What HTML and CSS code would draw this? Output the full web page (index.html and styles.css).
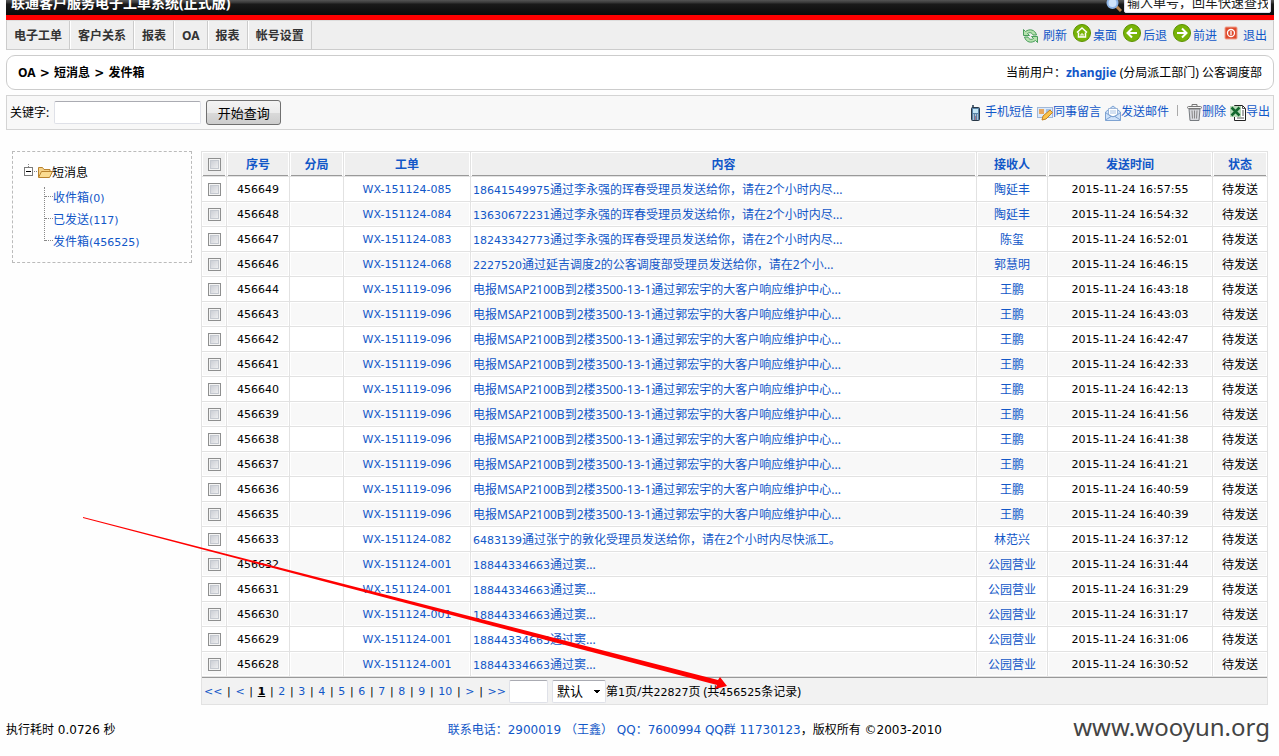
FILE: index.html
```
<!DOCTYPE html>
<html lang="zh-CN">
<head>
<meta charset="utf-8">
<title>联通客户服务电子工单系统(正式版)</title>
<link rel="stylesheet" href="styles.css">
</head>
<body>
<header class="banner">
  <h1 class="title">联通客户服务电子工单系统(正式版)</h1>
  <label class="quick" for="quick">
    <svg width="16" height="16" viewBox="0 0 16 16" aria-label="搜索"><path d="M10 9l5 5" stroke="#b9824c" stroke-width="3"/><circle cx="6.500" cy="6" r="5" fill="#cfe3fa" stroke="#8db4e6" stroke-width="2"/></svg>
  </label>
  <input class="quick-input" id="quick" type="text" value="输入单号，回车快速查找">
</header>
<nav class="nav">
  <div class="tabs"><a href="#">电子工单</a><a href="#">客户关系</a><a href="#">报表</a><a href="#">OA</a><a href="#">报表</a><a href="#">帐号设置</a></div>
  <div class="tools">
    <a href="#"><svg width="17" height="16" viewBox="0 0 17 16"><g fill="#b5e2ae" stroke="#4a9e5c"><path d="M1.500 1.500v6h6L5.500 5.500c2-1.500 4.500-1 5.500 1.500h3.500C13 1.500 7.500.5 3.500 3.500z"/><path d="M15.500 14.500v-6h-6l2 2c-2 1.500-4.500 1-5.500-1.500H2.500c1.500 5.500 7 6.500 11 3.500z"/></g></svg><span class="gap">刷新</span></a>
    <a href="#"><svg class="up" width="18" height="18" viewBox="0 0 18 18"><circle cx="9" cy="9" r="8.500" fill="#78b407" stroke="#5b9100"/><path d="M4 8.500L9 4l5 4.500M5.500 8.500V13h7V8.500" fill="none" stroke="#fff" stroke-width="1.500"/><path d="M8 13v-3h2v3" fill="none" stroke="#fff"/></svg><span>桌面</span></a>
    <a href="#"><svg class="up" width="18" height="18" viewBox="0 0 18 18"><circle cx="9" cy="9" r="8.500" fill="#78b407" stroke="#5b9100"/><path d="M14 9H5M9 4.500L4.500 9L9 13.500" fill="none" stroke="#fff" stroke-width="2"/></svg><span>后退</span></a>
    <a href="#"><svg class="up" width="18" height="18" viewBox="0 0 18 18"><circle cx="9" cy="9" r="8.500" fill="#78b407" stroke="#5b9100"/><path d="M4 9h9M9 4.500L13.500 9L9 13.500" fill="none" stroke="#fff" stroke-width="2"/></svg><span>前进</span></a>
    <a href="#"><svg class="up" width="16" height="14" viewBox="0 0 16 14"><rect x="2" y="1" width="12" height="12" rx="1" fill="#df4a2c" stroke="#f0a08c" stroke-width="1"/><circle cx="8" cy="7" r="3.500" fill="none" stroke="#fff" stroke-width="1.300"/><path d="M8 5v4" stroke="#fff" stroke-width="1.300"/></svg><span class="gap">退出</span></a>
  </div>
</nav>
<section class="crumb">
  <strong>OA<span class="step"> &gt; </span>短消息<span class="step"> &gt; </span>发件箱</strong>
  <span>当前用户：<a href="#"><b>zhangjie</b></a> (分局派工部门) 公客调度部</span>
</section>
<form class="bar">
  <label for="kw">关键字:</label><input class="kw" id="kw" type="text"><button class="go" type="button">开始查询</button>
  <div class="actions">
    <a class="sms" href="#"><svg width="14" height="18" viewBox="0 0 14 18"><path d="M4 1v4" stroke="#567" stroke-width="2"/><rect x="2.500" y="3.500" width="8" height="13" rx="1" fill="#5983a8" stroke="#273746"/><rect x="4" y="5" width="5" height="4" fill="#c3e5f5"/><path d="M4 11h1M6 11h1M8 11h1M4 13h1M8 13h1M4 15h1M8 15h1" stroke="#fff"/><path d="M6 13h1M6 15h1" stroke="#f66"/></svg><span>手机短信</span></a>
    <a href="#"><svg width="16" height="16" viewBox="0 0 16 16"><rect x=".5" y="2.500" width="15" height="10" fill="#dceafb" stroke="#a0b8d8"/><rect x="2" y="4" width="5" height="5" fill="#e8a860"/><path d="M9 5h5M9 7h4" stroke="#6e9cd2"/><path d="M5 15l1-4 7-6 2.500 2.500L9 14z" fill="#fac34b" stroke="#c28024"/></svg><span>同事留言</span></a>
    <a href="#"><svg width="16" height="16" viewBox="0 0 16 16"><path d="M.5 7L8 1l7.500 6v8.500H.5z" fill="#cfe2fa" stroke="#7ea3d2"/><path d="M3.500 3.500h9v6L8 12 3.500 9.500z" fill="#fff" stroke="#9ab4d6"/><path d="M5 6h6M5 8h6" stroke="#a8c2e4"/><path d="M.5 7.500L6 11.500.5 15M15.500 7.500L10 11.500l5.500 3.500M6 11.500h4" fill="none" stroke="#7ea3d2"/></svg><span>发送邮件</span></a>
    <i class="sep"></i>
    <a href="#"><svg width="15" height="17" viewBox="0 0 15 17"><path d="M5 2V.5h5V2" fill="none" stroke="#777"/><path d="M2 5h11l-1 11.500H3z" fill="#d7d9dd" stroke="#777b80"/><path d="M5 6.500l.5 8M7.500 6.500v8M10 6.500l-.5 8" stroke="#888"/><rect x=".5" y="2.500" width="14" height="2" rx="1" fill="#f4f4f4" stroke="#777"/></svg><span>删除</span></a>
    <a href="#"><svg width="16" height="16" viewBox="0 0 16 16"><path d="M4.500.5h8l3 3v12h-11z" fill="#fff" stroke="#222"/><path d="M12.500.5v3h3M12 6h2M12 8h2M12 10h2M7 13h7" fill="none" stroke="#555"/><rect y="1" width="11" height="11" fill="#b9dab9"/><path d="M1.500 2.500l8 8M9.500 2.500l-8 8" stroke="#14682e" stroke-width="2.500"/></svg><span>导出</span></a>
  </div>
</form>
<main class="main">
  <aside class="tree">
    <div class="root"><svg width="30" height="18" viewBox="0 0 30 18"><path d="M4.500 0v4M10 7.500h4" stroke="#888" stroke-dasharray="1 1"/><rect x=".5" y="3.500" width="8" height="8" fill="#fff" stroke="#7b7b7b"/><path d="M2 7.500h5" stroke="#000"/><path d="M14.500 13V3.500h4l1.500 2h6v3" fill="#f6d38a" stroke="#b9832e"/><path d="M14.500 13.500l3-6h11l-3 6z" fill="#fbdc91" stroke="#b9832e"/></svg><span>短消息</span></div>
    <ul>
      <li><a href="#">收件箱<span class="num">(0)</span></a></li>
      <li><a href="#">已发送<span class="num">(117)</span></a></li>
      <li><a href="#">发件箱<span class="num">(456525)</span></a></li>
    </ul>
  </aside>
  <div class="list">
  <table>
    <colgroup><col class="c1"><col class="c2"><col class="c3"><col class="c4"><col><col class="c6"><col class="c7"><col class="c8"></colgroup>
    <thead><tr><th><input type="checkbox" aria-label="全选"></th><th><a href="#">序号</a></th><th><a href="#">分局</a></th><th><a href="#">工单</a></th><th><a href="#">内容</a></th><th><a href="#">接收人</a></th><th><a href="#">发送时间</a></th><th><a href="#">状态</a></th></tr></thead>
    <tbody>
    <tr><td><input type="checkbox" aria-label="456649"></td><td>456649</td><td></td><td><a href="#">WX-151124-085</a></td><td><a href="#"><span class="num">18641549975</span>通过李永强的珲春受理员发送给你，请在2个小时内尽...</a></td><td><a href="#">陶延丰</a></td><td>2015-11-24 16:57:55</td><td>待发送</td></tr>
    <tr><td><input type="checkbox" aria-label="456648"></td><td>456648</td><td></td><td><a href="#">WX-151124-084</a></td><td><a href="#"><span class="num">13630672231</span>通过李永强的珲春受理员发送给你，请在2个小时内尽...</a></td><td><a href="#">陶延丰</a></td><td>2015-11-24 16:54:32</td><td>待发送</td></tr>
    <tr><td><input type="checkbox" aria-label="456647"></td><td>456647</td><td></td><td><a href="#">WX-151124-083</a></td><td><a href="#"><span class="num">18243342773</span>通过李永强的珲春受理员发送给你，请在2个小时内尽...</a></td><td><a href="#">陈玺</a></td><td>2015-11-24 16:52:01</td><td>待发送</td></tr>
    <tr><td><input type="checkbox" aria-label="456646"></td><td>456646</td><td></td><td><a href="#">WX-151124-068</a></td><td><a href="#"><span class="num">2227520</span>通过延吉调度2的公客调度部受理员发送给你，请在2个小...</a></td><td><a href="#">郭慧明</a></td><td>2015-11-24 16:46:15</td><td>待发送</td></tr>
    <tr><td><input type="checkbox" aria-label="456644"></td><td>456644</td><td></td><td><a href="#">WX-151119-096</a></td><td><a href="#">电报MSAP2100B到2楼3500-13-1通过郭宏宇的大客户响应维护中心...</a></td><td><a href="#">王鹏</a></td><td>2015-11-24 16:43:18</td><td>待发送</td></tr>
    <tr><td><input type="checkbox" aria-label="456643"></td><td>456643</td><td></td><td><a href="#">WX-151119-096</a></td><td><a href="#">电报MSAP2100B到2楼3500-13-1通过郭宏宇的大客户响应维护中心...</a></td><td><a href="#">王鹏</a></td><td>2015-11-24 16:43:03</td><td>待发送</td></tr>
    <tr><td><input type="checkbox" aria-label="456642"></td><td>456642</td><td></td><td><a href="#">WX-151119-096</a></td><td><a href="#">电报MSAP2100B到2楼3500-13-1通过郭宏宇的大客户响应维护中心...</a></td><td><a href="#">王鹏</a></td><td>2015-11-24 16:42:47</td><td>待发送</td></tr>
    <tr><td><input type="checkbox" aria-label="456641"></td><td>456641</td><td></td><td><a href="#">WX-151119-096</a></td><td><a href="#">电报MSAP2100B到2楼3500-13-1通过郭宏宇的大客户响应维护中心...</a></td><td><a href="#">王鹏</a></td><td>2015-11-24 16:42:33</td><td>待发送</td></tr>
    <tr><td><input type="checkbox" aria-label="456640"></td><td>456640</td><td></td><td><a href="#">WX-151119-096</a></td><td><a href="#">电报MSAP2100B到2楼3500-13-1通过郭宏宇的大客户响应维护中心...</a></td><td><a href="#">王鹏</a></td><td>2015-11-24 16:42:13</td><td>待发送</td></tr>
    <tr><td><input type="checkbox" aria-label="456639"></td><td>456639</td><td></td><td><a href="#">WX-151119-096</a></td><td><a href="#">电报MSAP2100B到2楼3500-13-1通过郭宏宇的大客户响应维护中心...</a></td><td><a href="#">王鹏</a></td><td>2015-11-24 16:41:56</td><td>待发送</td></tr>
    <tr><td><input type="checkbox" aria-label="456638"></td><td>456638</td><td></td><td><a href="#">WX-151119-096</a></td><td><a href="#">电报MSAP2100B到2楼3500-13-1通过郭宏宇的大客户响应维护中心...</a></td><td><a href="#">王鹏</a></td><td>2015-11-24 16:41:38</td><td>待发送</td></tr>
    <tr><td><input type="checkbox" aria-label="456637"></td><td>456637</td><td></td><td><a href="#">WX-151119-096</a></td><td><a href="#">电报MSAP2100B到2楼3500-13-1通过郭宏宇的大客户响应维护中心...</a></td><td><a href="#">王鹏</a></td><td>2015-11-24 16:41:21</td><td>待发送</td></tr>
    <tr><td><input type="checkbox" aria-label="456636"></td><td>456636</td><td></td><td><a href="#">WX-151119-096</a></td><td><a href="#">电报MSAP2100B到2楼3500-13-1通过郭宏宇的大客户响应维护中心...</a></td><td><a href="#">王鹏</a></td><td>2015-11-24 16:40:59</td><td>待发送</td></tr>
    <tr><td><input type="checkbox" aria-label="456635"></td><td>456635</td><td></td><td><a href="#">WX-151119-096</a></td><td><a href="#">电报MSAP2100B到2楼3500-13-1通过郭宏宇的大客户响应维护中心...</a></td><td><a href="#">王鹏</a></td><td>2015-11-24 16:40:39</td><td>待发送</td></tr>
    <tr><td><input type="checkbox" aria-label="456633"></td><td>456633</td><td></td><td><a href="#">WX-151124-082</a></td><td><a href="#"><span class="num">6483139</span>通过张宁的敦化受理员发送给你，请在2个小时内尽快派工。</a></td><td><a href="#">林范兴</a></td><td>2015-11-24 16:37:12</td><td>待发送</td></tr>
    <tr><td><input type="checkbox" aria-label="456632"></td><td>456632</td><td></td><td><a href="#">WX-151124-001</a></td><td><a href="#"><span class="num">18844334663</span>通过窦...</a></td><td><a href="#">公园营业</a></td><td>2015-11-24 16:31:44</td><td>待发送</td></tr>
    <tr><td><input type="checkbox" aria-label="456631"></td><td>456631</td><td></td><td><a href="#">WX-151124-001</a></td><td><a href="#"><span class="num">18844334663</span>通过窦...</a></td><td><a href="#">公园营业</a></td><td>2015-11-24 16:31:29</td><td>待发送</td></tr>
    <tr><td><input type="checkbox" aria-label="456630"></td><td>456630</td><td></td><td><a href="#">WX-151124-001</a></td><td><a href="#"><span class="num">18844334663</span>通过窦...</a></td><td><a href="#">公园营业</a></td><td>2015-11-24 16:31:17</td><td>待发送</td></tr>
    <tr><td><input type="checkbox" aria-label="456629"></td><td>456629</td><td></td><td><a href="#">WX-151124-001</a></td><td><a href="#"><span class="num">18844334663</span>通过窦...</a></td><td><a href="#">公园营业</a></td><td>2015-11-24 16:31:06</td><td>待发送</td></tr>
    <tr><td><input type="checkbox" aria-label="456628"></td><td>456628</td><td></td><td><a href="#">WX-151124-001</a></td><td><a href="#"><span class="num">18844334663</span>通过窦...</a></td><td><a href="#">公园营业</a></td><td>2015-11-24 16:30:52</td><td>待发送</td></tr>
    </tbody>
  </table>
  <div class="pager">
    <div class="pages"><a href="#">&lt;&lt;</a><i>|</i><a href="#">&lt;</a><i>|</i><b>1</b><i>|</i><a href="#">2</a><i>|</i><a href="#">3</a><i>|</i><a href="#">4</a><i>|</i><a href="#">5</a><i>|</i><a href="#">6</a><i>|</i><a href="#">7</a><i>|</i><a href="#">8</a><i>|</i><a href="#">9</a><i>|</i><a href="#">10</a><i>|</i><a href="#">&gt;</a><i>|</i><a href="#">&gt;&gt;</a></div>
    <input class="jump" type="text" aria-label="页码">
    <select class="size" aria-label="每页条数"><option>默认</option></select>
    <span>第<span class="num">1</span>页/共<span class="num">22827</span>页 (共<span class="num">456525</span>条记录)</span>
  </div>
  </div>
</main>
<footer class="foot">
  <span>执行耗时 0.0726 秒</span>
  <p><a href="#">联系电话：2900019 （王鑫） QQ：7600994 QQ群 11730123</a>，版权所有 ©2003-2010</p>
</footer>
<div class="mark">www.wooyun.org</div>
<svg class="arrow" width="646" height="174" viewBox="0 0 646 174" aria-hidden="true"><path d="M0 0L635 163L637 160L644 169L632 172L634 168L0 1z" fill="#f00"/></svg>
</body>
</html>
```
FILE: styles.css
```
* { box-sizing: border-box; }
body {
  position: relative;
  min-height: 100vh;
  margin: 0 5px 0 6px;
  background: #fefefe;
  color: #000;
  font: 12px/18px "Noto Sans", "Noto Sans CJK SC", sans-serif;
}
a { color: #1157c8; text-decoration: none; }
svg { display: block; flex: none; }
input, button, select { font-family: inherit; }
.num { font-family: "DejaVu Sans", sans-serif; font-size: 11px; }

.banner {
  display: flex;
  align-items: flex-end;
  height: 20px;
  overflow: hidden;
  padding: 0 3px 0 5px;
  border-bottom: 5px solid #f00;
  background: linear-gradient(#555 0, #333 3px, #1a1a1a 4px, #0a0a0a 15px);
}
.title { flex: 1; margin: 0 0 2px; color: #fff; font-size: 14px; line-height: 20px; }
.quick { padding: 0 2px 2px 0; }
.quick-input {
  width: 147px;
  height: 24px;
  margin-bottom: 2px;
  padding: 0 2px;
  border: 1px solid #dde;
  border-radius: 2px;
  background: #fff;
  color: #222;
  font-size: 13px;
}

.nav {
  display: flex;
  justify-content: space-between;
  height: 30px;
  border: 1px solid #ccc;
  border-top-color: #ddd;
  background: #efefef;
}
.tabs { display: flex; }
.tabs a {
  padding: 1px 7px 0;
  border-left: 1px solid #fff;
  border-right: 1px solid #ccc;
  color: #333;
  font-weight: bold;
  line-height: 28px;
}
.tabs a:first-child { border-left: 0; }
.tools { display: flex; gap: 6px; align-items: center; padding: 2px 6px 0 0; }
.tools a, .actions a { display: flex; align-items: center; }
.tools a { gap: 2px; }
.tools .gap { padding-left: 2px; }
.tools .up { margin-bottom: 6px; }

.crumb {
  display: flex;
  justify-content: space-between;
  align-items: center;
  height: 35px;
  margin: 5px 0;
  padding: 0 11px;
  border: 1px solid #ccc;
  border-radius: 9px;
  background: #fff;
}
.step { font-family: "DejaVu Sans", sans-serif; }

.bar {
  display: flex;
  align-items: center;
  height: 35px;
  padding: 0 3px;
  border: 1px solid #d4d4d4;
  background: #f8f8f8;
}
.kw, .jump { border: 1px solid #dfe1e8; border-top-color: #aaabb2; border-radius: 2px; background: #fff; }
.kw { width: 147px; height: 23px; margin: 0 5px; }
.go {
  width: 75px;
  height: 25px;
  padding: 0;
  border: 1px solid #707070;
  border-radius: 3px;
  background: linear-gradient(#f3f3f3 0, #ebebeb 50%, #dadada 51%, #cdcdcd 100%);
  color: #000;
  font-size: 13px;
  line-height: 20px;
}
.actions { display: flex; align-items: center; gap: 4px; margin-left: auto; }
.actions span { margin-bottom: 2px; }
.actions .sms { gap: 2px; }
.sep { width: 1px; height: 11px; margin: 0 5px 4px 4px; background: #aaa; }

.main { display: flex; align-items: flex-start; gap: 9px; margin-top: 21px; padding: 0 6px; }
.tree { width: 180px; height: 112px; padding: 9px 11px; border: 1px dashed #bbb; }
.root { display: flex; align-items: center; line-height: 22px; }
.root span { margin-left: -2px; padding-top: 1px; }
.tree ul {
  width: 100px;
  height: 54px;
  margin: 3px 0 0 20px;
  padding: 0;
  border-left: 1px dotted #888;
  list-style: none;
}
.tree li { display: flex; align-items: center; height: 22px; white-space: nowrap; }
.tree li::before { content: ""; width: 8px; margin-bottom: 3px; border-top: 1px dotted #888; }

.list { flex: 1; min-width: 0; border: 1px solid #e2e2e2; border-top: 0; }
table { width: calc(100% + 2px); margin: 0 -1px; border-collapse: collapse; table-layout: fixed; }
.c1 { width: 25px; }
.c2 { width: 63px; }
.c3 { width: 54px; }
.c4 { width: 127px; }
.c6 { width: 71px; }
.c7 { width: 165px; }
.c8 { width: 55px; }
th, td {
  height: 25px;
  padding: 2px 2px 0;
  border: 1px solid #e2e2e2;
  box-shadow: inset 0 0 0 1px #fff;
  line-height: 18px;
  text-align: center;
  white-space: nowrap;
}
th:first-child, td:first-child { padding: 0; }
th { background: #efefef; box-shadow: inset 1px 1px #fff, inset -1px 0 #fff, inset 0 -1px #999; }
tbody tr { background: #fff; }
tbody tr:nth-child(even) { background: #f8f8f8; }
td:nth-child(5) { text-align: left; }
td:nth-child(2), td:nth-child(4), td:nth-child(7) { font-family: "DejaVu Sans", sans-serif; font-size: 11px; }
th input, td input {
  display: block;
  width: 13px;
  height: 13px;
  margin: 0 auto;
  appearance: none;
  border: 1px solid #8e8f8f;
  background: linear-gradient(135deg, #c4c7cf, #f6f6f6);
  box-shadow: inset 0 0 0 1px #f4f4f4, inset 0 0 0 2px #c5c9d0;
}

.pager {
  display: flex;
  align-items: center;
  height: 27px;
  padding: 0 2px;
  border-top: 1px solid #999;
  background: #f2f2f2;
}
.pager > span, .pages { padding-top: 2px; }
.pages { display: flex; gap: 4px; font-family: "DejaVu Sans", sans-serif; font-size: 11px; }
.pages i { width: 5px; font-style: normal; text-align: center; }
.pages b { text-decoration: underline; }
.jump { width: 39px; height: 23px; margin: 0 4px 0 3px; }
.size {
  width: 54px;
  height: 23px;
  padding: 0 4px;
  appearance: none;
  border: 1px solid #dfe1e8;
  border-top-color: #aaabb2;
  border-radius: 2px;
  background:
    linear-gradient(45deg, transparent 50%, #000 50%) 40px 9px / 4px 4px no-repeat,
    linear-gradient(-45deg, transparent 50%, #000 50%) 44px 9px / 4px 4px no-repeat,
    #fff;
  color: #000;
  font-size: 13px;
}

.foot {
  display: flex;
  margin-top: 16px;
  font-family: "DejaVu Sans", "Noto Sans CJK SC", sans-serif;
}
.foot p { flex: 1; margin: 0; text-align: center; }
.mark {
  position: absolute;
  right: 4px;
  bottom: 12px;
  color: #444;
  font-size: 24px;
  line-height: 34px;
}
.arrow { position: absolute; left: 77px; top: 517px; pointer-events: none; }
```
